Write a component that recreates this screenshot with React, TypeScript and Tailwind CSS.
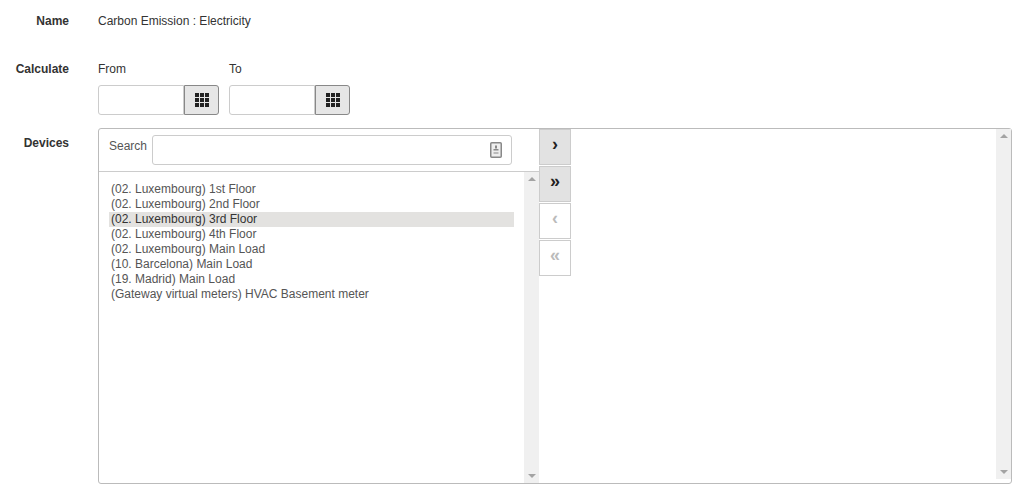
const devices = [
  '(02. Luxembourg) 1st Floor',
  '(02. Luxembourg) 2nd Floor',
  '(02. Luxembourg) 3rd Floor',
  '(02. Luxembourg) 4th Floor',
  '(02. Luxembourg) Main Load',
  '(10. Barcelona) Main Load',
  '(19. Madrid) Main Load',
  '(Gateway virtual meters) HVAC Basement meter',
]

function GridIcon() {
  return (
    <svg width="14" height="15" viewBox="0 0 14 15" fill="#222" aria-hidden="true">
      {[0, 5, 10].map((y) =>
        [0, 5, 10].map((x) => <rect key={`${x}-${y}`} x={x} y={y} width="4" height="4" />),
      )}
    </svg>
  )
}

function DateField() {
  return (
    <div className="flex">
      <input className="h-[30px] w-[86px] rounded-l-[3px] border border-[#ccc] bg-white" />
      <button
        type="button"
        className="flex h-[30px] w-[35px] items-center justify-center rounded-r-[3px] border border-[#888] bg-[#e6e6e6]"
      >
        <GridIcon />
      </button>
    </div>
  )
}

function Scrollbar({ className }: { className: string }) {
  return (
    <div className={`flex w-[15px] shrink-0 flex-col items-center justify-between bg-[#f0f0f0] py-[5px] ${className}`}>
      <div className="h-0 w-0 border-x-[4px] border-b-[4px] border-x-transparent border-b-[#a3a3a3]" />
      <div className="h-0 w-0 border-x-[4px] border-t-[4px] border-x-transparent border-t-[#a3a3a3]" />
    </div>
  )
}

function MoveButton({ label, active }: { label: string; active: boolean }) {
  return (
    <button
      type="button"
      className={`flex h-[36px] w-[32px] items-center justify-center border border-[#ccc] pb-[7px] text-[18px] leading-none font-bold ${
        active ? 'bg-[#e2e2e2] text-[#222]' : 'bg-white text-[#bbb]'
      }`}
    >
      {label}
    </button>
  )
}

export default function App() {
  return (
    <div className="h-[500px] w-[1028px] overflow-hidden bg-white pt-[14px] font-['Liberation_Sans',sans-serif] text-[12px] leading-[15px] text-[#333]">
      <div className="flex">
        <div className="w-[69px] text-right font-bold">Name</div>
        <div className="ml-[29px]">Carbon Emission : Electricity</div>
      </div>

      <div className="mt-[33px] flex">
        <div className="w-[69px] text-right font-bold">Calculate</div>
        <div className="ml-[29px] flex gap-[10px]">
          <div>
            <div className="mb-[8px]">From</div>
            <DateField />
          </div>
          <div>
            <div className="mb-[8px]">To</div>
            <DateField />
          </div>
        </div>
      </div>

      <div className="mt-[13px] flex">
        <div className="w-[69px] pt-[8px] text-right font-bold">Devices</div>
        <div className="ml-[29px] flex h-[356px] w-[914px] rounded-[3px] border border-[#bbb]">
          <div className="flex w-[440px] shrink-0 flex-col">
            <div className="flex h-[43px] shrink-0 items-start gap-[5px] border-b border-[#ccc] pt-[6px] pl-[10px]">
              <span className="pt-[4px] text-[#555]">Search</span>
              <div className="relative h-[30px] w-[360px] rounded-[3px] border border-[#ccc]">
                <svg className="absolute top-[6px] right-[9px]" width="12" height="16" viewBox="0 0 12 16" aria-hidden="true">
                  <rect x="0.75" y="0.75" width="10.5" height="14.5" rx="1" fill="#eee" stroke="#888" strokeWidth="1.5" />
                  <rect x="5" y="3.5" width="2" height="3" fill="#888" />
                  <rect x="3.5" y="7" width="5" height="1.5" fill="#888" />
                  <rect x="3.5" y="10" width="5" height="2" fill="#bbb" />
                </svg>
              </div>
            </div>
            <div className="flex min-h-0 flex-1">
              <div className="flex-1 pt-[10px] pl-[10px] text-[#555]">
                <div className="w-[405px]">
                  {devices.map((d, i) => (
                    <div key={d} className={`pl-[2px] ${i === 2 ? 'bg-[#e3e2e0] text-[#333]' : ''}`}>
                      {d}
                    </div>
                  ))}
                </div>
              </div>
              <Scrollbar className="h-full" />
            </div>
          </div>
          <div className="flex flex-1">
            <div className="flex w-[32px] shrink-0 flex-col gap-[1px]">
              <MoveButton label="›" active />
              <MoveButton label="»" active />
              <MoveButton label="‹" active={false} />
              <MoveButton label="«" active={false} />
            </div>
            <div className="flex-1" />
            <Scrollbar className="h-[350px]" />
          </div>
        </div>
      </div>
    </div>
  )
}
